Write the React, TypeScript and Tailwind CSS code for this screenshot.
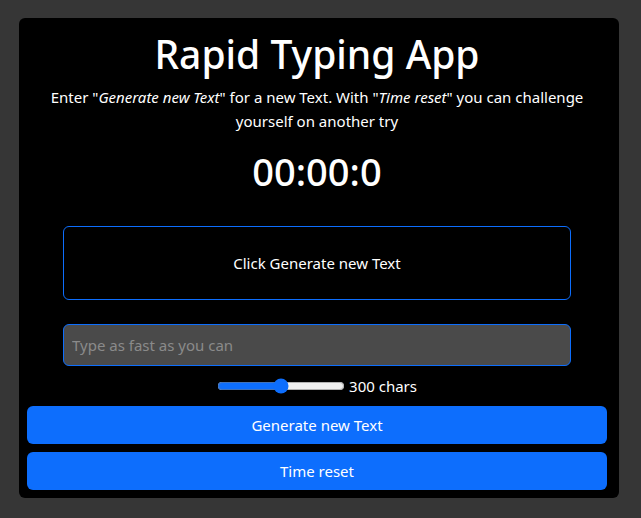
import React from "react";

export default function App() {
  return (
    <div className="min-h-[518px] bg-[#363636] px-[19px] pt-[18px] font-['Noto_Sans',sans-serif] text-white">
      <div className="flex w-[600px] flex-col items-center rounded-[6px] bg-black pb-2 pl-2 pr-3 pt-[12px]">
        <h1 className="text-[39px] leading-[48px] font-medium">Rapid Typing App</h1>
        <p className="mt-[7px] px-2 text-center text-[15px] leading-[24px]">
          Enter "<i>Generate new Text</i>" for a new Text. With "<i>Time reset</i>" you can challenge yourself on another try
        </p>
        <div className="mt-[14px] text-[38px] leading-[48px] font-medium">00:00:0</div>

        <div className="mt-[31px] flex h-[74px] w-[508px] items-center justify-center rounded-[6px] border border-[#0d6efd] text-[15px]">
          Click Generate new Text
        </div>

        <input
          type="text"
          placeholder="Type as fast as you can"
          className="mt-[24px] h-[42px] w-[508px] rounded-[6px] border border-[#0d6efd] bg-[#4a4a4a] px-2 text-[15px] text-white placeholder:text-[#8a8a8a] outline-none"
        />

        <div className="mt-[8px] flex items-center gap-1">
          <input
            type="range"
            min={100}
            max={500}
            defaultValue={300}
            className="w-[128px] accent-[#0d6efd]"
          />
          <span className="text-[15px] leading-[24px]">300 chars</span>
        </div>

        <button className="mt-[8px] h-[38px] w-full rounded-[6px] bg-[#0d6efd] text-[15px]">
          Generate new Text
        </button>
        <button className="mt-[8px] h-[38px] w-full rounded-[6px] bg-[#0d6efd] text-[15px]">
          Time reset
        </button>
      </div>
    </div>
  );
}
